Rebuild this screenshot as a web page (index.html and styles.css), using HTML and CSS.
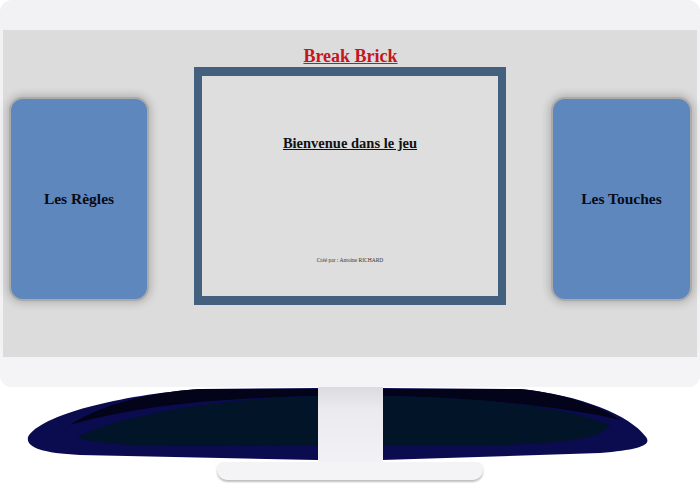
FILE: index.html
```html
<!DOCTYPE html>
<html lang="fr">
<head>
    <meta charset="UTF-8">
    <meta name="viewport" content="width=device-width, initial-scale=1.0">
    <title>Break Brick</title>
    <link rel="stylesheet" href="styles.css">
</head>
<body>
    <div class="monitor">
        <div class="frame">
            <div class="screen">
                <h1 class="title">Break Brick</h1>
                <div class="row">
                    <div class="card">Les Règles</div>
                    <div class="board">
                        <h2 class="welcome">Bienvenue dans le jeu</h2>
                        <p class="author">Créé par : Antoine RICHARD</p>
                    </div>
                    <div class="card card-right">Les Touches</div>
                </div>
            </div>
        </div>

        <div class="stand">
            <!-- shadow drawn under the stand -->
            <svg class="shadow" width="700" height="97" viewBox="0 387 700 97">
                <path d="M317 388 L200 389 C120 395 40 415 28 437 C26 447 40 453 80 455 L317 460 L382 460 L600 453 C640 450 652 445 646 437 C630 415 580 395 520 389 L382 388 Z" fill="#0b0b50"/>
                <path d="M200 389 L520 389 C560 393 600 405 620 420 C560 405 450 396 382 396 L317 396 C200 398 120 410 70 425 C100 405 150 392 200 389 Z" fill="#03031a"/>
                <path d="M77 437 C120 415 220 398 317 396 L382 396 C470 397 560 405 610 425 C600 440 560 443 500 445 L150 446 C110 444 85 441 77 437 Z" fill="#021427"/>
            </svg>
            <div class="neck"></div>
            <div class="base"></div>
        </div>
    </div>
</body>
</html>
```

FILE: styles.css
```css
body {
    margin: 0;
    padding: 0;
    background-color: #ffffff;
    font-family: "Liberation Serif", "Times New Roman", serif;
}
.monitor {
    width: 700px;
    height: 484px;
}
.frame {
    padding: 30px 3px 30px 3px;
    background-color: #f2f2f4;
    border-radius: 12px;
    box-shadow: inset 0 -31px 0 #f4f4f6;
}
.screen {
    height: 327px;
    background-color: #dcdcdc;
    box-sizing: border-box;
    padding: 16px 7px 0 8px;
}
.title {
    margin: 0;
    font-size: 18px;
    line-height: 21px;
    text-align: center;
    color: #c4161c;
    text-decoration: underline;
}
.row {
    display: flex;
    justify-content: space-between;
    align-items: flex-start;
}
.card {
    width: 136px;
    height: 200px;
    margin-top: 32px;
    background-color: #5e87bd;
    border-radius: 12px;
    box-shadow: 0 0 0 2px #aaaaaa, 0 0 8px 4px rgba(0, 0, 0, 0.2);
    display: flex;
    justify-content: center;
    align-items: center;
    font-size: 15.5px;
    font-weight: bold;
    color: #0b0b16;
}
.card-right {
    width: 137px;
}
.board {
    width: 312px;
    height: 238px;
    box-sizing: border-box;
    border: solid #43617f;
    border-width: 9px 8px;
    background-color: #dedede;
    text-align: center;
}
.welcome {
    margin: 59px 0 0 0;
    font-size: 14.5px;
    line-height: 17px;
    text-decoration: underline;
    color: #111;
}
.author {
    margin: 104px 0 0 0;
    font-size: 5.5px;
    line-height: 8px;
    color: #333;
}
.stand {
    position: relative;
    height: 97px;
}
.shadow {
    position: absolute;
    top: 0;
    left: 0;
}
.neck {
    position: relative;
    width: 65px;
    height: 75px;
    margin: 0 auto;
    background: linear-gradient(#dcdce0, #ebebef 30%, #f2f2f5);
}
.base {
    position: relative;
    width: 266px;
    height: 18px;
    margin: 0 auto;
    background-color: #f4f4f6;
    border-radius: 6px 6px 10px 10px;
    box-shadow: 0 2px 2px rgba(0, 0, 0, 0.25);
}
```
